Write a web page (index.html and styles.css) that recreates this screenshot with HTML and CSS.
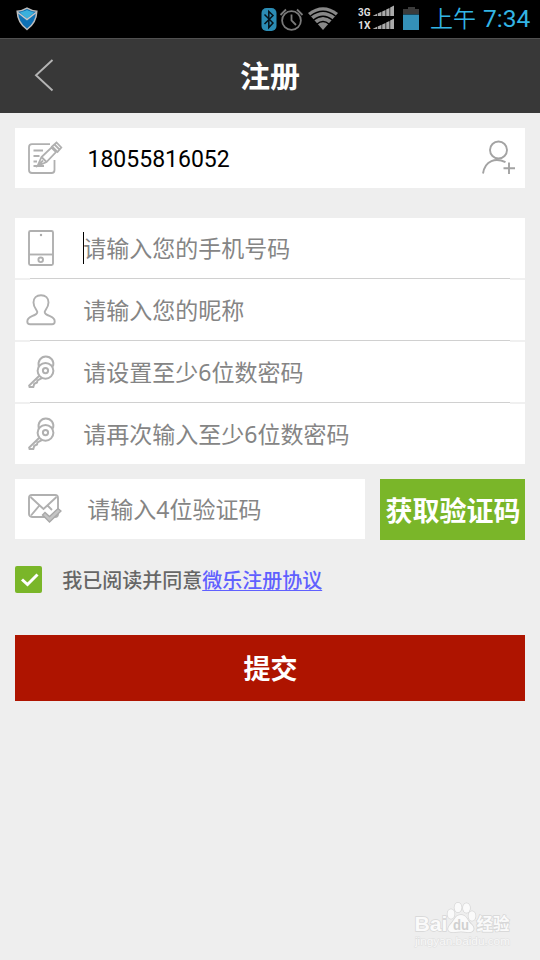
FILE: index.html
```html
<!DOCTYPE html>
<html lang="zh-CN">
<head>
<meta charset="utf-8">
<title>注册</title>
<link rel="stylesheet" href="styles.css">
</head>
<body>
<div class="status">
  <svg class="shield" width="22" height="24" viewBox="0 0 22 24"><path d="M11 1.200C8 3 4.500 4 1.200 4.300C1.500 12 4.500 18 11 22.500C17.500 18 20.500 12 20.800 4.300C17.500 4 14 3 11 1.200Z" fill="#0e70b4" stroke="#bdbdbd" stroke-width="1.500"/><path d="M4 5.500C7 4.500 9 4 11 3C13 4 15 4.500 18 5.500L11 12Z" fill="#3bb0dc"/><path d="M2 5.500L11 12.500L20 5.500" fill="none" stroke="#c8c8c8" stroke-width="1.500"/></svg>
  <svg class="sysicons" width="162" height="30" viewBox="0 0 162 30">
    <rect x="1.500" y="8" width="15" height="23" rx="5" fill="#2b8cb4"/>
    <path d="M4.500 14.500L13 23L8.800 27.500V11.500L13 15.500L4.500 24" fill="none" stroke="#061219" stroke-width="1.500"/>
    <g fill="none" stroke="#7a7a7a" stroke-width="1.800"><circle cx="31.500" cy="20.500" r="9.400"/><path d="M31.500 14.500V20.500L36 25"/><path d="M20.500 15L26 9.500M42.500 15L37 9.500"/></g>
    <path d="M48 13Q63 1.500 78 13L63 30Z" fill="#888"/>
    <g fill="none" stroke="#000" stroke-width="1.500"><path d="M50.500 16Q63 6.500 75.500 16"/><path d="M53.500 20Q63 12.500 72.500 20"/><path d="M57 24Q63 19 69 24"/></g>
    <text x="98" y="16.300" class="net" textLength="12.500" lengthAdjust="spacingAndGlyphs">3G</text>
    <text x="98" y="29" class="net" textLength="12.500" lengthAdjust="spacingAndGlyphs">1X</text>
    <g fill="#aaa"><path id="sig" d="M112.500 16L117 13.800V16ZM117.700 13.500L121.500 11.800V16H117.700ZM122.200 11.500L125.500 10V16H122.200ZM126.200 9.500L129.500 8V16H126.200ZM130.200 7.500L134 5.500V16H130.200Z"/><use href="#sig" y="13"/></g>
    <path d="M148 7H155V9H159V14H143V9H148Z" fill="#3b3b3b"/><rect x="143" y="14.500" width="16" height="15.500" fill="#3490b8"/>
  </svg>
  <span class="ampm">上午</span><span class="clock">7:34</span>
</div>
<header class="bar">
  <svg class="back" width="22" height="36" viewBox="0 0 22 36"><path d="M19.500 2L3 17.300L19.500 32.500" fill="none" stroke="#b4b4b4" stroke-width="1.900"/></svg>
  <h1>注册</h1>
</header>
<main>
  <section class="field account">
    <svg class="icon" width="40" height="40" viewBox="0 0 40 40"><g fill="none" stroke="#b0b0b0" stroke-width="1.800"><path d="M25 6.200H7Q4 6.200 4 9.200V32Q4 35 7 35H26.500Q29.500 35 29.500 32V22"/><path d="M8.500 12.500H18M8.500 18H14.500M8.500 23.500H12M8.500 28H19"/><path d="M12.500 28L16.500 19L26.500 9.500L31 14L21.500 24ZM16.500 19L21.500 24M12.500 28L18 22.500"/><path d="M27 8.500L32.500 14L36.300 9.500L31.500 4.500ZM29.500 6.500L34.500 11.500"/></g></svg>
    <span class="phone">18055816052</span>
    <svg class="adduser" width="36" height="38" viewBox="0 0 36 38"><g fill="none" stroke="#a3a3a3" stroke-width="1.900"><circle cx="18.500" cy="11" r="8.500"/><path d="M3 34.500C5 21 16 18.500 25.500 23.200M23.500 29.200H35M29 23.500V35"/></g></svg>
  </section>
  <section class="group">
    <div class="field">
      <svg class="icon" width="40" height="40" viewBox="0 0 40 40"><g fill="none" stroke="#b0b0b0" stroke-width="1.900"><rect x="4" y="3" width="24" height="34" rx="1.500"/><path d="M4 26.500H28"/><circle cx="15.700" cy="31.800" r="2.300"/></g><circle cx="16" cy="7" r="1.200" fill="#aaa"/></svg>
      <span class="hint">请输入您的手机号码</span><i class="caret"></i>
    </div>
    <div class="rule"></div>
    <div class="field">
      <svg class="icon" width="40" height="40" viewBox="0 0 40 40"><path d="M12.300 22C12 20 8.500 17.500 8.500 12.500C8.500 8 11.500 5.200 16 5.200S23.500 8 23.500 12.500C23.500 17.500 20 20 19.700 22C19.500 24 22 25 25 26.200C28 27.500 29.800 29 29.700 31.500Q29.700 34.300 27 34.300H5.200Q2.300 34.300 2.300 31.500C2.300 29 4 27.500 7 26.200C10 25 12.500 24 12.300 22Z" fill="none" stroke="#b0b0b0" stroke-width="1.900"/></svg>
      <span class="hint">请输入您的昵称</span>
    </div>
    <div class="rule"></div>
    <div class="field">
      <svg class="icon" width="40" height="40" viewBox="0 0 40 40"><g id="key" fill="none" stroke="#b0b0b0" stroke-width="2"><circle cx="20.500" cy="18.800" r="7.900"/><circle cx="20.500" cy="18.600" r="2.600"/><path d="M13.800 14.500C12.500 9 16 4.500 20.800 4.500C26 4.500 29.500 9 28 14.500"/><path d="M14.300 23.800L4.200 33.500L4.600 35H8.300L9.300 31.800L12 30.500L12.500 28.500L17.300 25.800"/></g></svg>
      <span class="hint">请设置至少6位数密码</span>
    </div>
    <div class="rule"></div>
    <div class="field">
      <svg class="icon" width="40" height="40" viewBox="0 0 40 40"><use href="#key"/></svg>
      <span class="hint">请再次输入至少6位数密码</span>
    </div>
  </section>
  <section class="verify">
    <div class="field">
      <svg class="icon" width="40" height="40" viewBox="0 0 40 40"><g fill="none" stroke="#b0b0b0" stroke-width="1.900"><rect x="4" y="6" width="29" height="22" rx="3"/><path d="M5.500 8L18.500 20L31.500 8M6 26.500L14 17M23 17L27 21"/></g><path d="M17.500 26L20 23.500L24.500 27.500L33 19.500L36 22L24.500 33Z" fill="#c4c4c4" stroke="#a8a8a8" stroke-width="1.300"/></svg>
      <span class="hint">请输入4位验证码</span>
    </div>
    <button class="get">获取验证码</button>
  </section>
  <div class="agree">
    <span class="check"><svg width="27" height="27" viewBox="0 0 27 27"><path d="M7 13.500L12.500 18.500L22.500 8.500" fill="none" stroke="#fff" stroke-width="3"/></svg></span>
    <span class="agreetext">我已阅读并同意<a>微乐注册协议</a></span>
  </div>
  <button class="submit">提交</button>
</main>
<svg class="mark" width="104" height="50" viewBox="0 0 104 50">
  <g fill="#fafafa" stroke="#d6d6d6" stroke-width="1.500" paint-order="stroke">
    <text x="1.500" y="31" class="brand" textLength="33" lengthAdjust="spacingAndGlyphs">Bai</text>
    <ellipse cx="38" cy="14" rx="3.500" ry="4.800"/><ellipse cx="45" cy="7.500" rx="3.500" ry="4.800"/><ellipse cx="53.500" cy="8" rx="3.500" ry="4.800"/><ellipse cx="59" cy="16" rx="3.500" ry="4.800"/>
    <path d="M48 15C54 15 54 21 59 25C63 30 59 33 54 32Q48 31 42 32C36 33 33 30 37 25C42 20 42 15 48 15Z"/>
    <text x="63.500" y="30" class="cn" textLength="33" lengthAdjust="spacingAndGlyphs">经验</text>
    <text x="2" y="44.500" class="url" textLength="95" lengthAdjust="spacingAndGlyphs">jingyan.baidu.com</text>
  </g>
  <text x="40" y="30" class="du" textLength="16" lengthAdjust="spacingAndGlyphs">du</text>
</svg>
</body>
</html>
```
FILE: styles.css
```css
* { box-sizing: border-box; }
body {
  margin: 0;
  width: 540px;
  height: 960px;
  overflow: hidden;
  background: #eee;
  font-family: "Noto Sans", "Noto Sans CJK SC", sans-serif;
}
svg { display: block; flex: none; }
.status { height: 38px; background: #000; display: flex; align-items: flex-start; color: #33b5e5; }
.shield { margin: 7px 0 0 16px; }
.sysicons { margin-left: 222px; height: 30px; overflow: visible; }
.net { font: bold 10.500px Roboto, sans-serif; fill: #ddd; }
.ampm { margin: 0 0 0 8px; font: 350 23px/34px "Noto Sans CJK SC", sans-serif; }
.clock { margin-left: 7px; font: 24.500px/38px Roboto, sans-serif; }
.bar {
  height: 75px;
  background: #383838;
  border-top: 1px solid #505050;
  display: grid;
  grid-template-columns: 80px 1fr 80px;
  align-items: center;
}
.back { margin-left: 33px; }
h1 { margin: 0; color: #fff; text-align: center; font-size: 30px; line-height: 74px; font-weight: 700; }
main { padding: 15px 15px 0; }
.field { height: 60px; background: #fff; display: flex; align-items: center; position: relative; }
.icon { margin-left: 10px; }
.hint { margin-left: 18.300px; font-size: 23px; line-height: 60px; color: #858585; white-space: nowrap; }
.phone { margin-left: 22.500px; padding-top: 3px; font: 23px/60px Roboto, sans-serif; color: #000; flex: 1; }
.adduser { margin-right: 9px; }
.caret { position: absolute; left: 68px; top: 14px; width: 1px; height: 32px; background: #000; }
.group { margin-top: 30px; }
.rule { height: 2px; background: #f0f0f0; display: flex; justify-content: center; }
.rule::before { content: ""; width: 480px; height: 2px; background: #fff; border-top: 1px solid #d0d0d0; }
.verify { margin-top: 15px; display: flex; gap: 15px; height: 61px; }
.verify .field { width: 350px; }
.verify .hint { margin-left: 22.300px; }
button { border: 0; padding: 0; color: #fff; font-family: inherit; font-weight: 700; font-size: 27px; white-space: nowrap; }
.get { width: 145px; height: 61px; background: #7ab629; padding-left: 1px; }
.agree { margin-top: 26px; height: 27px; display: flex; align-items: center; }
.check { width: 27px; height: 27px; border-radius: 2px; background: #7ab629; }
.agreetext { margin-left: 20.200px; padding-top: 2px; font-size: 20px; line-height: 27px; font-weight: 500; color: #666; white-space: nowrap; }
.agreetext a { color: #6060ff; text-decoration: underline; text-decoration-thickness: 1px; text-underline-offset: 2px; }
.submit { display: block; margin-top: 42px; padding: 0 0 2px 1px; width: 510px; height: 66px; background: #ae1400; }
.mark { position: absolute; left: 413px; top: 900px; }
.brand { font: bold 21px "Liberation Sans", sans-serif; }
.cn { font: bold 16.500px "Noto Sans CJK SC", sans-serif; }
.url { font: 10.500px "Liberation Sans", sans-serif; stroke-width: 1px; stroke: #e0e0e0; fill: #f8f8f8; }
.du { font: bold 14px "Liberation Sans", sans-serif; fill: #d0d0d0; }
```
